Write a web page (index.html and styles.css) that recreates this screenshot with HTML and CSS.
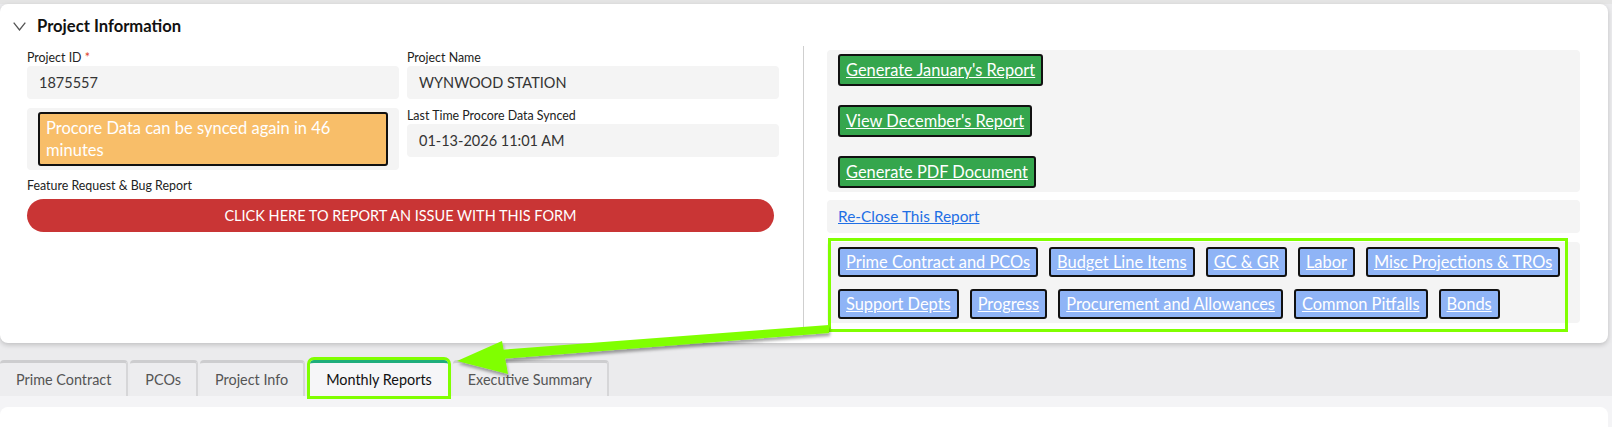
FILE: index.html
```html
<!DOCTYPE html>
<html lang="en">
<head>
    <meta charset="UTF-8">
    <meta name="viewport" content="width=device-width, initial-scale=1.0">
    <title>Project Information</title>
    <link rel="stylesheet" href="styles.css">
</head>
<body>
    <div class="page">
        <!-- project info card -->
        <section class="card">
            <div class="card-header">
                <svg class="chevron" width="13" height="9" viewBox="0 0 13 9">
                    <polyline points="0.7,0.7 6.5,8 12.3,0.7" fill="none" stroke="#555" stroke-width="1.3"/>
                </svg>
                <h2>Project Information</h2>
            </div>
            <div class="card-body">
                <div class="col-left">
                    <div class="field-grid">
                        <div class="field">
                            <label>Project ID <span class="req">*</span></label>
                            <div class="input">1875557</div>
                        </div>
                        <div class="field">
                            <label>Project Name</label>
                            <div class="input">WYNWOOD STATION</div>
                        </div>
                        <div class="sync-wrap">
                            <div class="sync-note">Procore Data can be synced again in 46 minutes</div>
                        </div>
                        <div class="field">
                            <label>Last Time Procore Data Synced</label>
                            <div class="input">01-13-2026 11:01 AM</div>
                        </div>
                    </div>
                    <label class="feature-label">Feature Request &amp; Bug Report</label>
                    <a class="report-btn" href="#">CLICK HERE TO REPORT AN ISSUE WITH THIS FORM</a>
                </div>

                <div class="divider"></div>

                <div class="col-right">
                    <div class="panel report-panel">
                        <a class="green-btn" href="#">Generate January's Report</a>
                        <a class="green-btn" href="#">View December's Report</a>
                        <a class="green-btn" href="#">Generate PDF Document</a>
                    </div>
                    <div class="panel reclose-panel">
                        <a href="#">Re-Close This Report</a>
                    </div>
                    <div class="panel links-panel">
                        <div class="link-row">
                            <a class="blue-btn" href="#">Prime Contract and PCOs</a>
                            <a class="blue-btn" href="#">Budget Line Items</a>
                            <a class="blue-btn" href="#">GC &amp; GR</a>
                            <a class="blue-btn" href="#">Labor</a>
                            <a class="blue-btn" href="#">Misc Projections &amp; TROs</a>
                        </div>
                        <div class="link-row">
                            <a class="blue-btn" href="#">Support Depts</a>
                            <a class="blue-btn" href="#">Progress</a>
                            <a class="blue-btn" href="#">Procurement and Allowances</a>
                            <a class="blue-btn" href="#">Common Pitfalls</a>
                            <a class="blue-btn" href="#">Bonds</a>
                        </div>
                        <div class="callout"></div>
                    </div>
                </div>
            </div>
        </section>

        <!-- tabs -->
        <div class="tabs">
            <div class="tab">Prime Contract</div>
            <div class="tab">PCOs</div>
            <div class="tab">Project Info</div>
            <div class="tab active">Monthly Reports</div>
            <div class="tab">Executive Summary</div>
        </div>
        <div class="tab-body">
            <div class="lower-card"></div>
        </div>

        <!-- annotation arrow -->
        <svg class="arrow" width="1612" height="427" viewBox="0 0 1612 427">
            <defs>
                <filter id="shade" x="-5%" y="-50%" width="110%" height="200%">
                    <feDropShadow dx="1" dy="3" stdDeviation="1.5" flood-color="#000" flood-opacity="0.35"/>
                </filter>
            </defs>
            <g filter="url(#shade)" fill="#80ff00">
                <polygon points="829,325 829,333 500,359 499,350"/>
                <polygon points="457,361 502,341 508,374"/>
            </g>
        </svg>
    </div>
</body>
</html>
```

FILE: styles.css
```css
* {
    margin: 0;
    padding: 0;
    box-sizing: border-box;
}

body {
    font-family: Lato, "Open Sans", sans-serif;
    background-color: #ebebed;
    color: #222;
}

.page {
    position: relative;
    width: 1612px;
    height: 427px;
    overflow: hidden;
    padding-top: 4px;
    background: linear-gradient(#e4e4e4 0, #e4e4e4 4px, #ebebed 4px);
}

.card {
    width: 1608px;
    background-color: #fff;
    border-radius: 8px;
    box-shadow: 0 2px 5px rgba(0,0,0,0.18);
}

.card-header {
    display: flex;
    align-items: center;
    gap: 11px;
    padding: 10px 13px 12px;
}

.card-header h2 {
    font-size: 16.6px;
    line-height: 24px;
    font-weight: 700;
    color: #111;
}

.card-body {
    display: flex;
    padding: 0 28px 20px 27px;
}

.col-left {
    width: 752px;
}

.divider {
    width: 1px;
    background-color: #cfcfcf;
    margin: -4px 23px -4px 24px;
}

.col-right {
    width: 753px;
}

.field-grid {
    display: grid;
    grid-template-columns: 1fr 1fr;
    column-gap: 8px;
    row-gap: 9px;
}

.field label,
.feature-label {
    display: block;
    font-size: 12.4px;
    line-height: 16px;
    color: #222;
}

.req {
    color: #e0452a;
}

.input {
    height: 33px;
    line-height: 33px;
    padding: 0 12px;
    background-color: #f4f4f4;
    border-radius: 4px;
    font-size: 14.5px;
    color: #333;
}

.sync-wrap {
    background-color: #f4f4f4;
    border-radius: 4px;
    padding: 4px 11px;
}

.sync-note {
    background-color: #f8be69;
    border: 2px solid #111;
    border-radius: 3px;
    padding: 3px 6px;
    font-size: 16.5px;
    line-height: 22px;
    color: #fff;
}

.feature-label {
    margin-top: 8px;
}

.report-btn {
    display: block;
    margin: 5px 5px 0 0;
    height: 33px;
    line-height: 33px;
    border-radius: 17px;
    background-color: #c93535;
    color: #fff;
    text-align: center;
    font-size: 14.5px;
    text-decoration: none;
}

.panel {
    background-color: #f4f4f4;
    border-radius: 4px;
}

.report-panel {
    display: flex;
    flex-direction: column;
    align-items: flex-start;
    gap: 19px;
    padding: 4px 11px;
}

.green-btn,
.blue-btn {
    display: inline-block;
    border: 2px solid #111;
    border-radius: 3px;
    padding: 0 6px;
    color: #fff;
    font-size: 16.4px;
    text-decoration: underline;
    white-space: nowrap;
}

.green-btn {
    height: 32px;
    line-height: 28px;
    background-color: #35a64d;
}

.blue-btn {
    height: 30px;
    line-height: 26px;
    background-color: #8fb4f6;
}

.reclose-panel {
    margin-top: 8px;
    height: 33px;
    line-height: 33px;
    padding: 0 11px;
    font-size: 15.4px;
}

.reclose-panel a {
    color: #1f6fe5;
}

.links-panel {
    position: relative;
    margin-top: 9px;
    padding: 5px 11px 4px;
    display: flex;
    flex-direction: column;
    gap: 12px;
}

.link-row {
    display: flex;
    gap: 11px;
}

.callout {
    position: absolute;
    top: -4px;
    left: 1px;
    right: 12px;
    bottom: -9px;
    border: 3px solid #80ff00;
    pointer-events: none;
}

.tabs {
    display: flex;
    gap: 2px;
    margin-top: 17px;
    height: 36px;
}

.tab {
    height: 36px;
    padding: 0 15px;
    line-height: 33px;
    font-size: 14.4px;
    color: #555;
    background-color: #ededef;
    border-top: 3px solid #cdcdcf;
    border-right: 2px solid #d6d6d8;
    border-radius: 4px 4px 0 0;
}

.tab:first-child {
    padding-left: 16px;
}

.tab.active {
    margin: 0 3px;
    padding: 0 16px;
    color: #111;
    background-color: #f6f6f8;
    border-top-color: #1fae7c;
    border-right: none;
    outline: 3px solid #80ff00;
}

.tab-body {
    background-color: #f4f4f6;
    padding-top: 11px;
}

.lower-card {
    width: 1608px;
    height: 40px;
    background-color: #fff;
    border-radius: 8px 8px 0 0;
}

.arrow {
    position: absolute;
    top: 0;
    left: 0;
    pointer-events: none;
}
```
